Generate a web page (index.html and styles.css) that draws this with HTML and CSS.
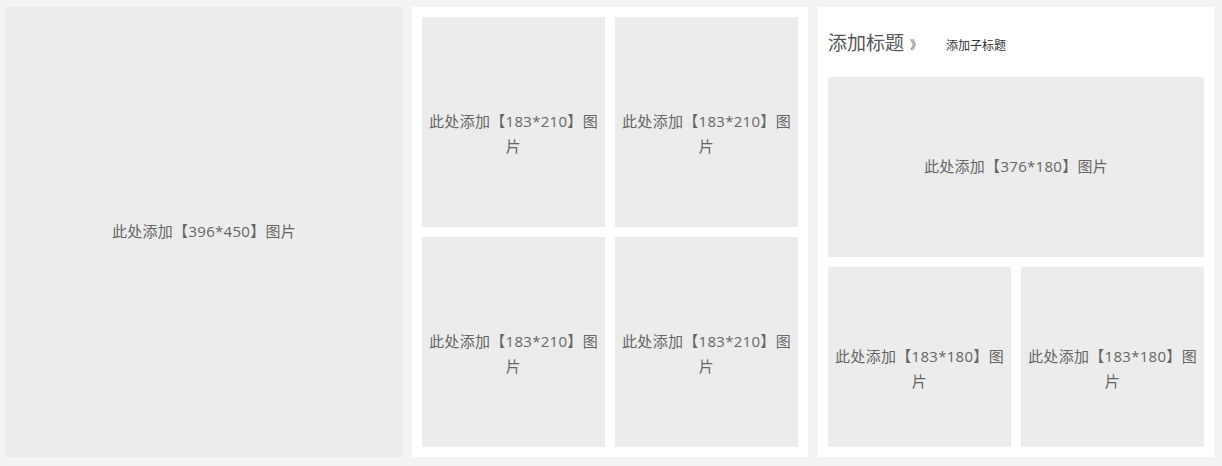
FILE: index.html
```html
<!DOCTYPE html>
<html lang="zh">
<head>
<meta charset="utf-8">
<link rel="stylesheet" href="styles.css">
</head>
<body>
<div class="row">
  <div class="ph big"><span>此处添加【396*450】图片</span></div>
  <div class="panel grid4">
    <div class="ph"><span>此处添加【183*210】图片</span></div>
    <div class="ph"><span>此处添加【183*210】图片</span></div>
    <div class="ph"><span>此处添加【183*210】图片</span></div>
    <div class="ph"><span>此处添加【183*210】图片</span></div>
  </div>
  <div class="panel col3">
    <div class="head">
      <span class="title">添加标题</span>
      <span class="arrow">》</span>
      <span class="sub">添加子标题</span>
    </div>
    <div class="ph wide"><span>此处添加【376*180】图片</span></div>
    <div class="pair">
      <div class="ph"><span>此处添加【183*180】图片</span></div>
      <div class="ph"><span>此处添加【183*180】图片</span></div>
    </div>
  </div>
</div>
</body>
</html>
```

FILE: styles.css
```css
html, body {
  margin: 0;
  padding: 0;
  background: #f3f3f3;
  font-family: "Open Sans", "Noto Sans CJK SC", sans-serif;
}
.row {
  display: flex;
  gap: 10px;
  padding: 7px 0 0 6px;
}
.ph {
  background: #ececec;
  color: #666;
  font-size: 15px;
  letter-spacing: 0.3px;
  display: flex;
  align-items: center;
  justify-content: center;
  text-align: center;
  padding: 0 5px;
  box-sizing: border-box;
}
.ph span {
  display: block;
  height: 25px;
  line-height: 25px;
  margin-top: -1px;
}
.big {
  width: 396px;
  height: 450px;
}
.panel {
  width: 396px;
  height: 450px;
  background: #fff;
  padding: 10px;
  box-sizing: border-box;
}
.grid4 {
  display: grid;
  grid-template-columns: 183px 183px;
  grid-template-rows: 210px 210px;
  gap: 10px;
}
.col3 {
  display: flex;
  flex-direction: column;
}
.head {
  height: 60px;
  display: flex;
  align-items: center;
  padding-bottom: 8px;
  box-sizing: border-box;
}
.title {
  font-size: 19px;
  color: #555;
  margin-top: -3px;
}
.arrow {
  font-size: 12px;
  color: #555;
  margin-left: 6px;
  margin-top: 4px;
}
.sub {
  font-size: 12px;
  color: #333;
  margin-left: 24px;
  margin-top: 3px;
}
.wide {
  height: 180px;
}
.pair {
  margin-top: 10px;
  display: grid;
  grid-template-columns: 183px 183px;
  gap: 10px;
  height: 180px;
}
```
